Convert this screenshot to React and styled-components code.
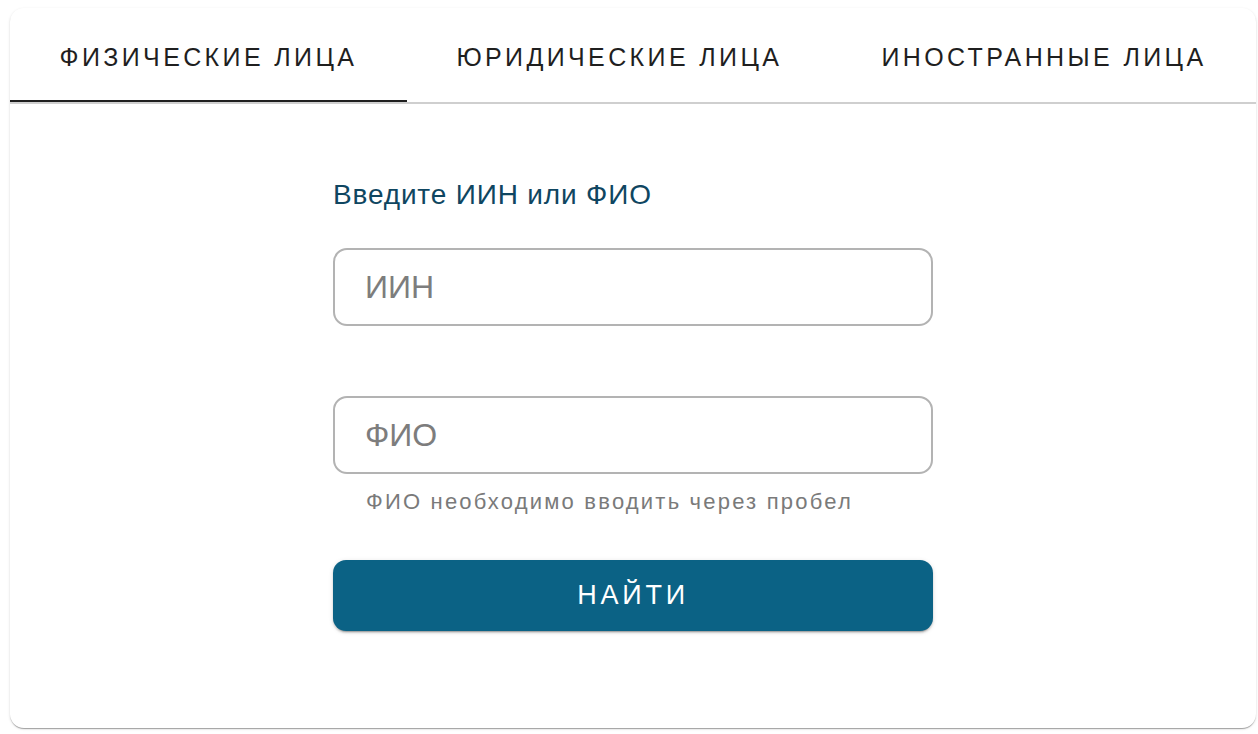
import React, { useState } from "react";
import styled, { createGlobalStyle } from "styled-components";

const Global = createGlobalStyle`
  html, body { margin: 0; padding: 0; background: #ffffff; }
  body { font-family: "Liberation Sans", Arial, Helvetica, sans-serif; }
  * { box-sizing: border-box; }
`;

const Page = styled.div`
  padding: 8px 2px 6px 10px;
`;

const Card = styled.div`
  background: #fff;
  border-radius: 14px;
  box-shadow: 0 2px 1px -1px rgba(0,0,0,0.2), 0 1px 1px 0 rgba(0,0,0,0.14), 0 1px 3px 0 rgba(0,0,0,0.12);
  height: 720px;
  overflow: hidden;
`;

const TabBar = styled.div`
  display: flex;
  border-bottom: 2px solid #cfcfcf;
  height: 96px;
`;

const Tab = styled.button`
  flex: 1 1 auto;
  position: relative;
  background: none;
  border: none;
  margin: 0;
  padding: 4px 0 0;
  font-family: "Liberation Sans", Arial, Helvetica, sans-serif;
  font-size: 25px;
  letter-spacing: 0.135em;
  text-transform: uppercase;
  white-space: nowrap;
  color: #1f1f1f;
  cursor: pointer;
  &::after {
    content: "";
    position: absolute;
    left: 0;
    right: 0;
    bottom: 0;
    height: 2px;
    background: ${(p) => (p.$active ? "#1f1f1f" : "transparent")};
  }
`;

const Form = styled.div`
  width: 600px;
  margin: 0 auto;
  padding-top: 75px;
  display: flex;
  flex-direction: column;
`;

const Label = styled.div`
  font-size: 28px;
  line-height: 32px;
  letter-spacing: 0.03em;
  color: #0f4661;
  margin-bottom: 37px;
`;

const Input = styled.input`
  width: 100%;
  height: 78px;
  border: 2px solid #b3b3b3;
  border-radius: 14px;
  padding: 0 30px;
  font-family: "Liberation Sans", Arial, Helvetica, sans-serif;
  font-size: 32px;
  color: #222;
  outline: none;
  margin-top: ${(p) => p.$gap || 0}px;
  &::placeholder { color: #7d7d7d; }
`;

const Helper = styled.div`
  margin: 15px 0 0 33px;
  font-size: 22px;
  line-height: 26px;
  letter-spacing: 0.1em;
  color: #7a7a7a;
`;

const Button = styled.button`
  margin-top: 45px;
  height: 71px;
  width: 100%;
  border: none;
  border-radius: 13px;
  background: #0b6285;
  color: #fff;
  font-family: "Liberation Sans", Arial, Helvetica, sans-serif;
  font-size: 27px;
  letter-spacing: 0.14em;
  text-transform: uppercase;
  box-shadow: 0 3px 1px -2px rgba(0,0,0,0.2), 0 2px 2px 0 rgba(0,0,0,0.14), 0 1px 5px 0 rgba(0,0,0,0.12);
  cursor: pointer;
`;

const tabs = ["Физические лица", "Юридические лица", "Иностранные лица"];

export default function App() {
  const [active, setActive] = useState(0);
  return (
    <Page>
      <Global />
      <Card>
        <TabBar>
          {tabs.map((t, i) => (
            <Tab key={t} $active={i === active} onClick={() => setActive(i)}>
              {t}
            </Tab>
          ))}
        </TabBar>
        <Form>
          <Label>Введите ИИН или ФИО</Label>
          <Input placeholder="ИИН" />
          <Input placeholder="ФИО" $gap={70} />
          <Helper>ФИО необходимо вводить через пробел</Helper>
          <Button>Найти</Button>
        </Form>
      </Card>
    </Page>
  );
}
